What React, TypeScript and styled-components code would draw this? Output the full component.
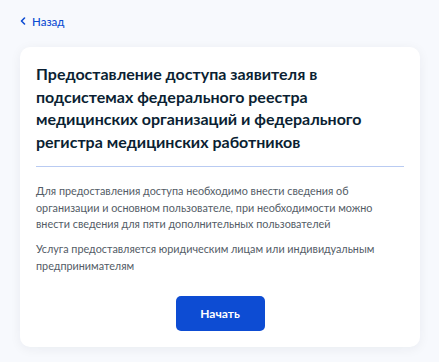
import React from 'react';
import styled, { createGlobalStyle } from 'styled-components';

const GlobalStyle = createGlobalStyle`
  html, body {
    margin: 0;
    padding: 0;
    background: #f7f9fd;
  }
  body {
    font-family: Lato, "Noto Sans", "Liberation Sans", sans-serif;
  }
`;

const Page = styled.div`
  width: 439px;
  min-height: 362px;
  box-sizing: border-box;
  padding: 9px 19px 17px 20px;
`;

const BackLink = styled.a`
  display: inline-flex;
  align-items: center;
  gap: 6px;
  height: 20px;
  color: #0d4cd3;
  font-size: 11.5px;
  font-weight: 500;
  text-decoration: none;
  cursor: pointer;
`;

const Card = styled.section`
  margin-top: 16px;
  background: #fff;
  border-radius: 10px;
  box-shadow: 0 2px 12px rgba(11, 31, 51, 0.06);
  padding: 16px 16px 16px 16px;
  display: flex;
  flex-direction: column;
`;

const Title = styled.h1`
  margin: 0;
  color: #0b1f33;
  font-size: 16px;
  font-weight: 700;
  line-height: 22.5px;
`;

const Divider = styled.hr`
  margin: 13px 0 16px;
  border: none;
  border-top: 1px solid #b9cbf2;
`;

const Body = styled.div`
  display: flex;
  flex-direction: column;
  gap: 8.5px;
`;

const Text = styled.p`
  margin: 0;
  color: #535c66;
  font-size: 10.8px;
  line-height: 16.5px;
`;

const Actions = styled.div`
  display: flex;
  justify-content: center;
  margin-top: 22px;
`;

const Button = styled.button`
  width: 89px;
  height: 35px;
  border: none;
  border-radius: 5px;
  background: #0d4cd3;
  color: #fff;
  font-family: inherit;
  font-size: 12px;
  font-weight: 700;
  cursor: pointer;
`;

const Chevron = () => (
  <svg width="6" height="8" viewBox="0 0 6 8" fill="none">
    <path d="M4.5 1L1.5 4l3 3" stroke="#0d4cd3" strokeWidth="1.6" strokeLinecap="round" strokeLinejoin="round" />
  </svg>
);

const App: React.FC = () => (
  <Page>
    <GlobalStyle />
    <BackLink>
      <Chevron />
      Назад
    </BackLink>
    <Card>
      <Title>
        Предоставление доступа заявителя в подсистемах федерального реестра
        медицинских организаций и федерального регистра медицинских работников
      </Title>
      <Divider />
      <Body>
        <Text>
          Для предоставления доступа необходимо внести сведения об организации и
          основном пользователе, при необходимости можно внести сведения для пяти
          дополнительных пользователей
        </Text>
        <Text>Услуга предоставляется юридическим лицам или индивидуальным предпринимателям</Text>
      </Body>
      <Actions>
        <Button>Начать</Button>
      </Actions>
    </Card>
  </Page>
);

export default App;
